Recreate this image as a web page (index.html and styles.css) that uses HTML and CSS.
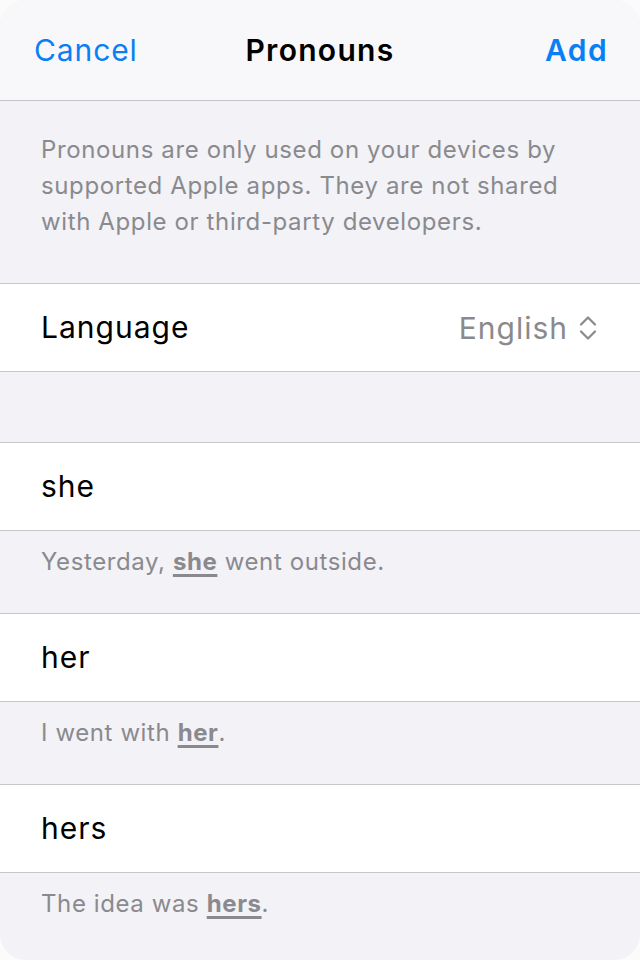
FILE: index.html
```html
<!DOCTYPE html>
<html lang="en">
<head>
<meta charset="utf-8">
<title>Pronouns</title>
<link rel="stylesheet" href="styles.css">
</head>
<body>
<div class="sheet">
  <header class="nav">
    <span class="nav-btn cancel">Cancel</span>
    <span class="nav-title">Pronouns</span>
    <span class="nav-btn add">Add</span>
  </header>

  <p class="intro">Pronouns are only used on your devices by supported Apple apps. They are not shared with Apple or third-party developers.</p>

  <div class="row lang">
    <span class="label">Language</span>
    <span class="value">English
      <svg class="updown" width="20" height="28" viewBox="0 0 20 28" aria-hidden="true">
        <path d="M3 10.5 L10 3.5 L17 10.5" fill="none" stroke="#8a8a8e" stroke-width="2.2" stroke-linecap="round" stroke-linejoin="round"/>
        <path d="M3 17.5 L10 24.5 L17 17.5" fill="none" stroke="#8a8a8e" stroke-width="2.2" stroke-linecap="round" stroke-linejoin="round"/>
      </svg>
    </span>
  </div>

  <div class="gap"></div>

  <div class="row"><span class="label">she</span></div>
  <p class="foot">Yesterday, <b>she</b> went outside.</p>

  <div class="row"><span class="label">her</span></div>
  <p class="foot">I went with <b>her</b>.</p>

  <div class="row"><span class="label">hers</span></div>
  <p class="foot last">The idea was <b>hers</b>.</p>
</div>
</body>
</html>
```

FILE: styles.css
```css
html, body {
  margin: 0;
  padding: 0;
  background: #fbfbfc;
}
body {
  font-family: Inter, "Noto Sans", "Liberation Sans", sans-serif;
  -webkit-font-smoothing: antialiased;
}
.sheet {
  width: 640px;
  height: 960px;
  background: #f2f2f7;
  border-radius: 26px;
  overflow: hidden;
  display: flex;
  flex-direction: column;
}
.nav {
  height: 100px;
  flex: none;
  background: #f8f8fa;
  border-bottom: 1px solid #c6c6c8;
  display: flex;
  align-items: center;
  justify-content: space-between;
  padding: 0 32px 0 34px;
  position: relative;
  font-size: 30px;
}
.nav-btn {
  color: #0a7ff5;
}
.cancel {
  letter-spacing: 0.9px;
}
.add {
  font-weight: 600;
  letter-spacing: 1.4px;
}
.nav-title {
  position: absolute;
  left: 0;
  right: 0;
  text-align: center;
  font-weight: 600;
  color: #000;
  letter-spacing: 1.3px;
  pointer-events: none;
}
.intro {
  margin: 0;
  padding: 31px 40px 43px 41px;
  font-size: 24px;
  line-height: 36px;
  color: #8a8a8e;
  letter-spacing: 0.62px;
}
.row {
  height: 87px;
  flex: none;
  background: #fff;
  border-top: 1px solid #c6c6c8;
  border-bottom: 1px solid #c6c6c8;
  display: flex;
  align-items: center;
  justify-content: space-between;
  padding: 0 42px 0 41px;
  font-size: 30px;
  letter-spacing: 1px;
  color: #000;
}
.row .label {
  margin-top: -2px;
}
.value {
  color: #8a8a8e;
  display: flex;
  align-items: center;
  gap: 10px;
}
.updown {
  display: block;
}
.gap {
  height: 70px;
  flex: none;
}
.foot {
  margin: 0;
  height: 82px;
  flex: none;
  box-sizing: border-box;
  padding: 13px 41px 0;
  font-size: 24px;
  line-height: 36px;
  color: #8a8a8e;
  letter-spacing: 0.6px;
}
.foot b {
  font-weight: 700;
  text-decoration: underline;
  text-decoration-thickness: 3px;
  text-underline-offset: 4px;
}
.foot.last {
  height: auto;
  flex: 1;
}
```
